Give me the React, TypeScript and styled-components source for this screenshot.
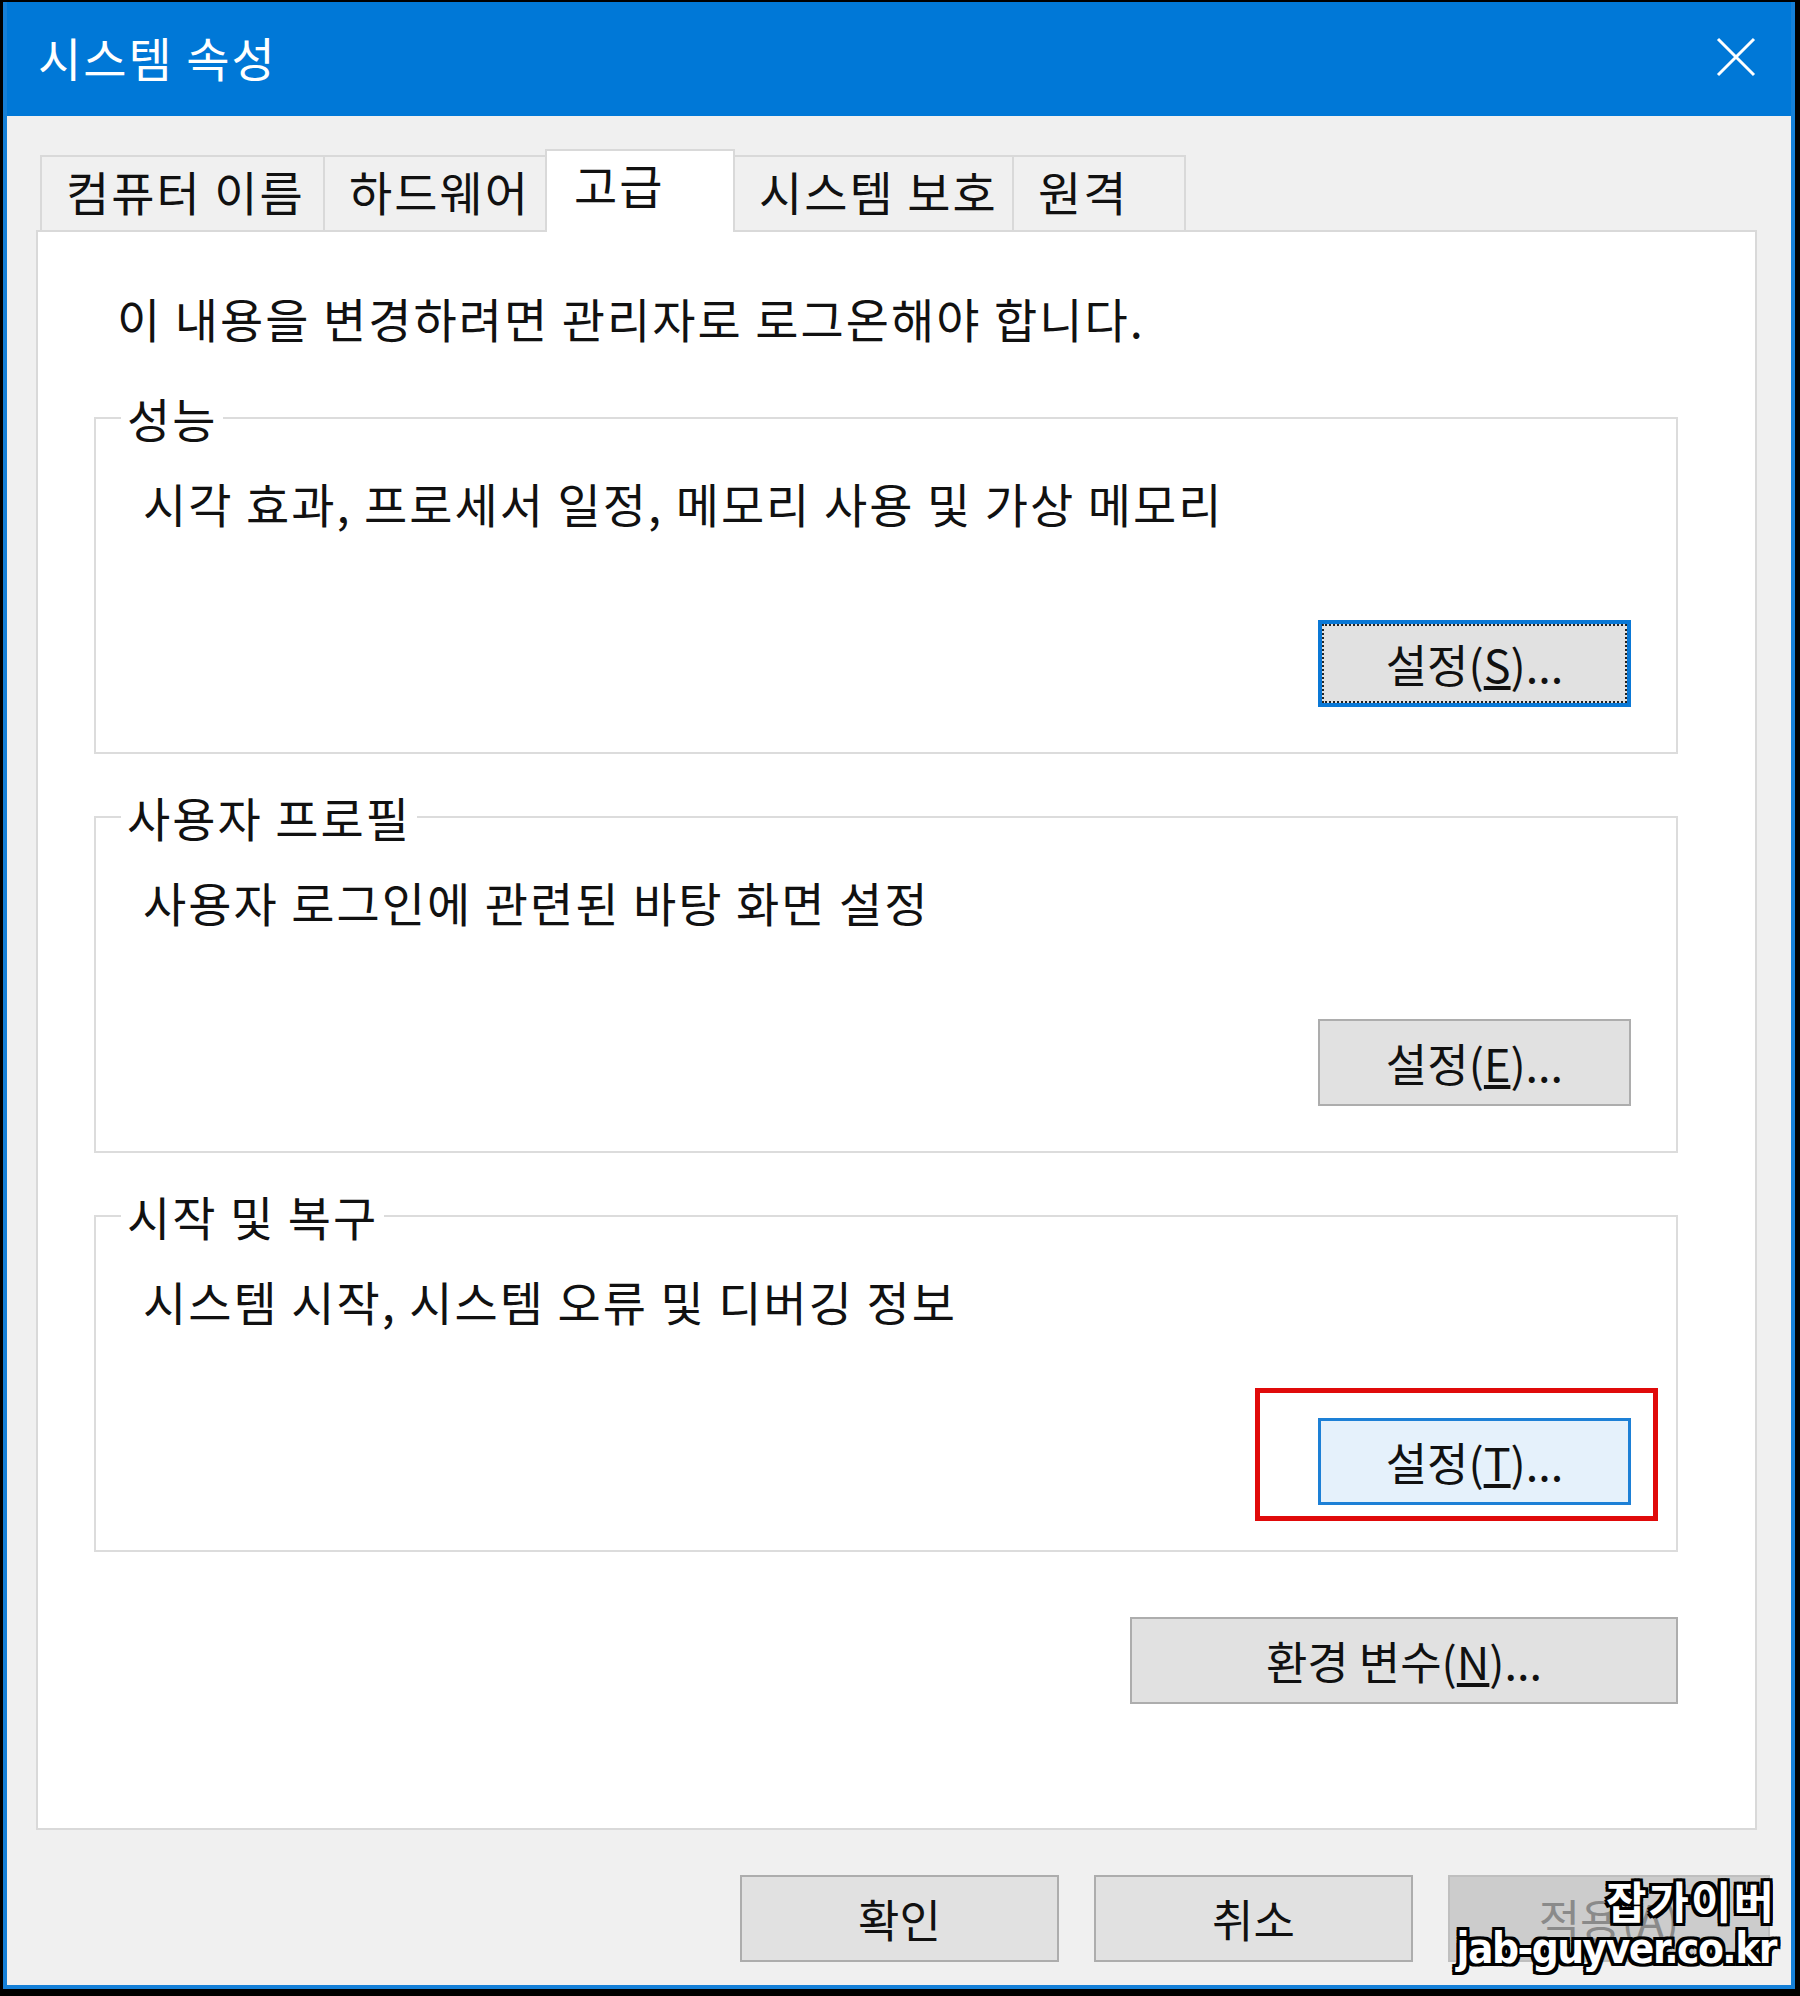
import React from 'react';
import styled, { createGlobalStyle, css } from 'styled-components';

const FONT = `"Noto Sans CJK KR", "Noto Sans", sans-serif`;

const GlobalStyle = createGlobalStyle`
  html, body { margin: 0; padding: 0; background: #000; }
  * { box-sizing: border-box; }
`;

const textFace = css`
  font-size: 47px;
  letter-spacing: 2px;
`;

const Screen = styled.div`
  position: relative;
  width: 1800px;
  height: 1996px;
  background: #000;
  padding: 2px 5px 7px 3px;
  font-family: ${FONT};
  color: #111;
`;

const Window = styled.div`
  height: 100%;
  display: flex;
  flex-direction: column;
  border: 4px solid #1580d8;
  border-top: none;
  background: #f0f0f0;
`;

const TitleBar = styled.div`
  height: 114px;
  flex: none;
  display: flex;
  align-items: center;
  justify-content: space-between;
  padding: 0 34px 4px 31px;
  background: #0078d7;
  color: #fff;
`;

const Title = styled.div`
  ${textFace};
  font-weight: 400;
  line-height: 56px;
`;

const CloseIcon = () => (
  <svg width="42" height="40" viewBox="0 0 42 40">
    <path d="M3 2 L39 38 M39 2 L3 38" stroke="#fff" strokeWidth="3" fill="none" />
  </svg>
);

const Body = styled.div`
  flex: 1;
  display: flex;
  flex-direction: column;
  padding: 33px 21px 0 29px;
`;

const TabStrip = styled.div`
  height: 81px;
  flex: none;
  display: flex;
  align-items: flex-end;
  padding-left: 4px;
`;

const Tab = styled.div<{ $w: number; $active?: boolean }>`
  position: relative;
  width: ${(p) => p.$w}px;
  height: 75px;
  margin-right: -2px;
  padding: 0 0 6px 24px;
  display: flex;
  align-items: center;
  ${textFace};
  line-height: 56px;
  white-space: nowrap;
  background: #f0f0f0;
  border: 2px solid #d9d9d9;
  border-bottom: none;
  ${(p) =>
    p.$active &&
    css`
      height: 83px;
      margin-bottom: -2px;
      padding-left: 27px;
      padding-bottom: 16px;
      background: #fff;
      z-index: 1;
    `}
`;

const Panel = styled.div`
  flex: 1;
  margin-right: 13px;
  display: flex;
  flex-direction: column;
  padding: 56px 77px 0 56px;
  background: #fff;
  border: 2px solid #d9d9d9;
`;

const Notice = styled.div`
  margin-left: 23px;
  ${textFace};
  line-height: 60px;
  margin-bottom: 42px;
`;

const Group = styled.fieldset`
  margin: 0 0 35px 0;
  min-width: 0;
  padding: 29px 45px 45px 47px;
  border: 2px solid #dcdcdc;
  display: flex;
  flex-direction: column;
`;

const Legend = styled.legend`
  margin-left: -22px;
  padding: 0 6px;
  ${textFace};
  line-height: 56px;
`;

const Desc = styled.div`
  ${textFace};
  line-height: 56px;
`;

const ButtonRow = styled.div<{ $top?: number }>`
  display: flex;
  justify-content: flex-end;
  gap: 35px;
  margin-top: ${(p) => p.$top ?? 0}px;
`;

type Variant = 'normal' | 'focused' | 'hover' | 'disabled';

const Button = styled.div<{ $w: number; $variant?: Variant }>`
  position: relative;
  width: ${(p) => p.$w}px;
  height: 87px;
  display: flex;
  align-items: center;
  justify-content: center;
  font-size: 45px;
  line-height: 56px;
  background: #e1e1e1;
  border: 2px solid #adadad;
  color: #111;
  ${(p) =>
    p.$variant === 'focused' &&
    css`
      border: 4px solid #0a78d6;
      outline: 2px dotted #222;
      outline-offset: -6px;
    `}
  ${(p) =>
    p.$variant === 'hover' &&
    css`
      background: #e5f1fb;
      border: 3px solid #1d80d6;
    `}
  ${(p) =>
    p.$variant === 'disabled' &&
    css`
      background: #cccccc;
      border-color: #bfbfbf;
      color: #8a8a8a;
    `}
`;

const Highlight = styled.span`
  position: absolute;
  top: -33px;
  right: -30px;
  bottom: -19px;
  left: -66px;
  border: 5px solid #e00a0a;
  pointer-events: none;
`;

const Footer = styled.div`
  flex: none;
  display: flex;
  justify-content: flex-end;
  gap: 35px;
  padding: 45px 0 23px;
`;

const Watermark = styled.div`
  position: absolute;
  right: 24px;
  bottom: 22px;
  display: flex;
  flex-direction: column;
  align-items: flex-end;
  color: #fff;
  font-weight: 700;
  text-shadow:
    -3px -3px 0 #000, 3px -3px 0 #000, -3px 3px 0 #000, 3px 3px 0 #000,
    0 -3px 0 #000, 0 3px 0 #000, -3px 0 0 #000, 3px 0 0 #000;
`;

const WmKor = styled.div`
  font-family: ${FONT};
  font-size: 44px;
  line-height: 48px;
  letter-spacing: 2px;
`;

const WmUrl = styled.div`
  font-family: "Liberation Sans Narrow", "DejaVu Sans Condensed", "Liberation Sans", sans-serif;
  font-size: 42px;
  line-height: 50px;
  letter-spacing: -1.5px;
`;

const groups = [
  { title: '성능', desc: '시각 효과, 프로세서 일정, 메모리 사용 및 가상 메모리', key: 'S', variant: 'focused' as Variant },
  { title: '사용자 프로필', desc: '사용자 로그인에 관련된 바탕 화면 설정', key: 'E', variant: 'normal' as Variant },
  { title: '시작 및 복구', desc: '시스템 시작, 시스템 오류 및 디버깅 정보', key: 'T', variant: 'hover' as Variant },
];

const tabs = [
  { label: '컴퓨터 이름', w: 285 },
  { label: '하드웨어', w: 224 },
  { label: '고급', w: 190, active: true },
  { label: '시스템 보호', w: 281 },
  { label: '원격', w: 174 },
];

export default function App() {
  return (
    <>
      <GlobalStyle />
      <Screen>
        <Window>
          <TitleBar>
            <Title>시스템 속성</Title>
            <CloseIcon />
          </TitleBar>
          <Body>
            <TabStrip>
              {tabs.map((t) => (
                <Tab key={t.label} $w={t.w} $active={t.active}>
                  {t.label}
                </Tab>
              ))}
            </TabStrip>
            <Panel>
              <Notice>이 내용을 변경하려면 관리자로 로그온해야 합니다.</Notice>
              {groups.map((g) => (
                <Group key={g.title}>
                  <Legend>{g.title}</Legend>
                  <Desc>{g.desc}</Desc>
                  <ButtonRow $top={89}>
                    <Button $w={313} $variant={g.variant}>
                      설정(<u>{g.key}</u>)...
                      {g.variant === 'hover' && <Highlight />}
                    </Button>
                  </ButtonRow>
                </Group>
              ))}
              <ButtonRow $top={30}>
                <Button $w={548}>
                  환경 변수(<u>N</u>)...
                </Button>
              </ButtonRow>
            </Panel>
            <Footer>
              <Button $w={319}>확인</Button>
              <Button $w={319}>취소</Button>
              <Button $w={322} $variant="disabled">
                적용(<u>A</u>)
              </Button>
            </Footer>
          </Body>
        </Window>
        <Watermark>
          <WmKor>잡가이버</WmKor>
          <WmUrl>jab-guyver.co.kr</WmUrl>
        </Watermark>
      </Screen>
    </>
  );
}
